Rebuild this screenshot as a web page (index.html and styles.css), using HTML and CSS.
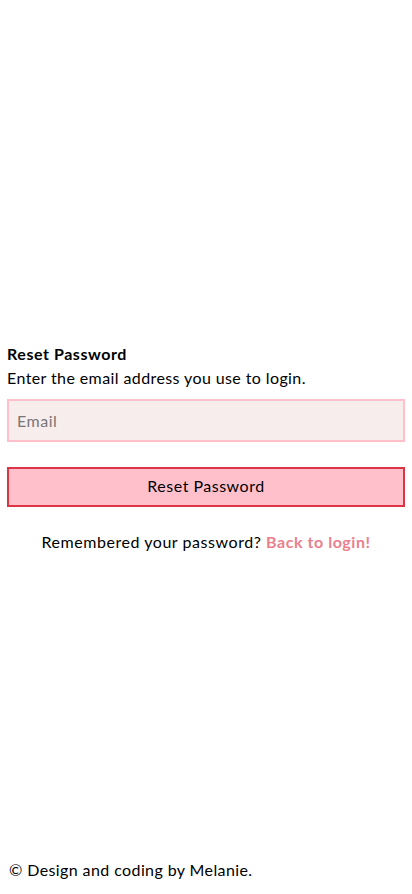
FILE: index.html
```html
<!DOCTYPE html>
<html lang="en">
<head>
<meta charset="utf-8">
<meta name="viewport" content="width=device-width, initial-scale=1">
<title>Reset Password</title>
<link rel="stylesheet" href="styles.css">
</head>
<body>
<div class="page">
  <main class="main">
    <form class="reset-form">
      <h1 class="title">Reset Password</h1>
      <p class="subtitle">Enter the email address you use to login.</p>
      <input class="email-input" type="email" placeholder="Email">
      <button class="reset-button" type="button">Reset Password</button>
      <p class="back-line">Remembered your password? <a class="back-link" href="#">Back to login!</a></p>
    </form>
  </main>
  <footer class="footer">© Design and coding by Melanie.</footer>
</div>
</body>
</html>
```
FILE: styles.css
```css
* { box-sizing: border-box; }
html, body { margin: 0; padding: 0; }
body {
  font-family: "Lato", "Open Sans", sans-serif;
  font-size: 16px;
  color: #000;
  background: #fff;
  letter-spacing: 0.4px;
}
.page {
  min-height: 894px;
  display: flex;
  flex-direction: column;
  padding: 0 7px;
}
.main {
  flex: 1;
  padding-top: 342px;
}
.reset-form {
  display: flex;
  flex-direction: column;
}
.title {
  margin: 0;
  font-size: 16px;
  font-weight: 700;
  line-height: 24px;
  letter-spacing: 0.55px;
}
.subtitle {
  margin: 0;
  line-height: 23px;
}
.email-input {
  margin-top: 10px;
  height: 43px;
  width: 100%;
  border: 2px solid #ffc0cb;
  background: #f8eded;
  padding: 0 8px;
  font-family: inherit;
  font-size: 16px;
  letter-spacing: 0.5px;
  color: #000;
  outline: none;
}
.email-input::placeholder { color: #7a7575; }
.reset-button {
  margin-top: 25px;
  height: 40px;
  width: 100%;
  border: 2px solid #dc3545;
  background: #ffc0cb;
  font-family: inherit;
  font-size: 16px;
  letter-spacing: 0.5px;
  color: #000;
  padding: 0 0 3px;
}
.back-line {
  margin: 23px 0 0;
  text-align: center;
  line-height: 24px;
  letter-spacing: 0.55px;
}
.back-link {
  color: #ec7f8d;
  font-weight: 700;
  text-decoration: none;
}
.footer {
  line-height: 24px;
  padding: 0 2px 12px;
}
```
